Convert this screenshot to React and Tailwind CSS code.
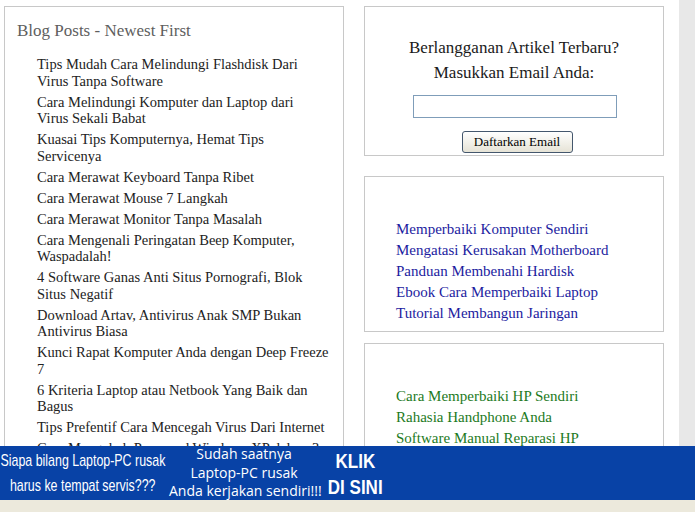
const posts = [
  ["Tips Mudah Cara Melindungi Flashdisk Dari", "Virus Tanpa Software"],
  ["Cara Melindungi Komputer dan Laptop dari", "Virus Sekali Babat"],
  ["Kuasai Tips Komputernya, Hemat Tips", "Servicenya"],
  ["Cara Merawat Keyboard Tanpa Ribet"],
  ["Cara Merawat Mouse 7 Langkah"],
  ["Cara Merawat Monitor Tanpa Masalah"],
  ["Cara Mengenali Peringatan Beep Komputer,", "Waspadalah!"],
  ["4 Software Ganas Anti Situs Pornografi, Blok", "Situs Negatif"],
  ["Download Artav, Antivirus Anak SMP Bukan", "Antivirus Biasa"],
  ["Kunci Rapat Komputer Anda dengan Deep Freeze", "7"],
  ["6 Kriteria Laptop atau Netbook Yang Baik dan", "Bagus"],
  ["Tips Prefentif Cara Mencegah Virus Dari Internet"],
  ["Cara Mengubah Password Windows XP dalam 3", "Langkah"],
]

const pcLinks = [
  "Memperbaiki Komputer Sendiri",
  "Mengatasi Kerusakan Motherboard",
  "Panduan Membenahi Hardisk",
  "Ebook Cara Memperbaiki Laptop",
  "Tutorial Membangun Jaringan",
]

const hpLinks = [
  "Cara Memperbaiki HP Sendiri",
  "Rahasia Handphone Anda",
  "Software Manual Reparasi HP",
]

function Panel({ children, className = "" }) {
  return <div className={`border border-[#c8c8c8] bg-white ${className}`}>{children}</div>
}

function LinkList({ items, color }) {
  return (
    <ul className="pl-[31px] pt-[42px]">
      {items.map((t) => (
        <li key={t} className={`h-[21px] text-[15px] leading-[21px] whitespace-nowrap ${color}`}>
          {t}
        </li>
      ))}
    </ul>
  )
}

export default function App() {
  return (
    <div className="relative flex h-screen overflow-hidden bg-white font-['Liberation_Serif',serif] text-[#222]">
      <div className="flex w-[679px] shrink-0 items-start gap-[20px] pl-[4px] pt-[6px]">
        <Panel className="w-[340px] shrink-0 pb-10">
          <h2 className="pl-[12px] pt-[14px] text-[17px] leading-[20px] text-[#5e5e5e]">
            Blog Posts - Newest First
          </h2>
          <ul className="mt-[15px] pl-[32px]">
            {posts.map((lines) => (
              <li key={lines[0]} className="mb-[4.5px] text-[14.5px] leading-[16.5px]">
                {lines.map((l) => (
                  <div key={l} className="whitespace-nowrap">{l}</div>
                ))}
              </li>
            ))}
          </ul>
        </Panel>

        <div className="flex w-[300px] shrink-0 flex-col">
          <Panel className="h-[150px] pt-[28px] text-center">
            <p className="text-[17px] leading-[25px] text-[#1a1a1a]">Berlangganan Artikel Terbaru?</p>
            <p className="text-[17px] leading-[25px] text-[#1a1a1a]">Masukkan Email Anda:</p>
            <div className="mt-[10px] flex justify-center">
              <input
                type="text"
                className="ml-[2px] h-[23px] w-[204px] border border-[#7f9db9] bg-white outline-none"
              />
            </div>
            <div className="mt-[13px] flex justify-center">
              <button
                type="button"
                className="ml-[6px] h-[22px] w-[111px] rounded-[3px] border border-[#44576d] bg-gradient-to-b from-white to-[#e6e3d6] text-[13px] leading-[20px] text-black"
              >
                Daftarkan Email
              </button>
            </div>
          </Panel>

          <Panel className="mt-[20px] h-[156px]">
            <LinkList items={pcLinks} color="text-[#1c1ca0]" />
          </Panel>

          <Panel className="mt-[11px] h-[160px]">
            <LinkList items={hpLinks} color="text-[#1d7a1d]" />
          </Panel>
        </div>
      </div>
      <div className="flex-1 bg-[#e8e8e8]" />

      <div className="absolute inset-x-0 bottom-0">
        <div className="flex h-[54px] bg-[#0842a6] text-white">
          <div className="ml-[-3px] flex w-[172px] shrink-0 flex-col items-center pt-[2px] font-['Liberation_Sans',sans-serif] text-[17px] leading-[25px]">
            <div className="scale-x-[0.73] whitespace-nowrap">Siapa bilang Laptop-PC rusak</div>
            <div className="scale-x-[0.73] whitespace-nowrap">harus ke tempat servis???</div>
          </div>
          <div className="mt-[-1px] w-[150px] shrink-0 text-center font-['Open_Sans',sans-serif] text-[14px] leading-[18.5px] whitespace-nowrap">
            <div>Sudah saatnya</div>
            <div>Laptop-PC rusak</div>
            <div>Anda kerjakan sendiri!!!</div>
          </div>
          <div className="flex w-[72px] shrink-0 flex-col items-center pt-[2px] font-['Liberation_Sans',sans-serif] text-[20px] font-bold leading-[26px]">
            <div className="scale-x-[0.85] whitespace-nowrap">KLIK</div>
            <div className="scale-x-[0.85] whitespace-nowrap">DI SINI</div>
          </div>
        </div>
        <div className="h-[12px] bg-[#ece9dc]" />
      </div>
    </div>
  )
}
